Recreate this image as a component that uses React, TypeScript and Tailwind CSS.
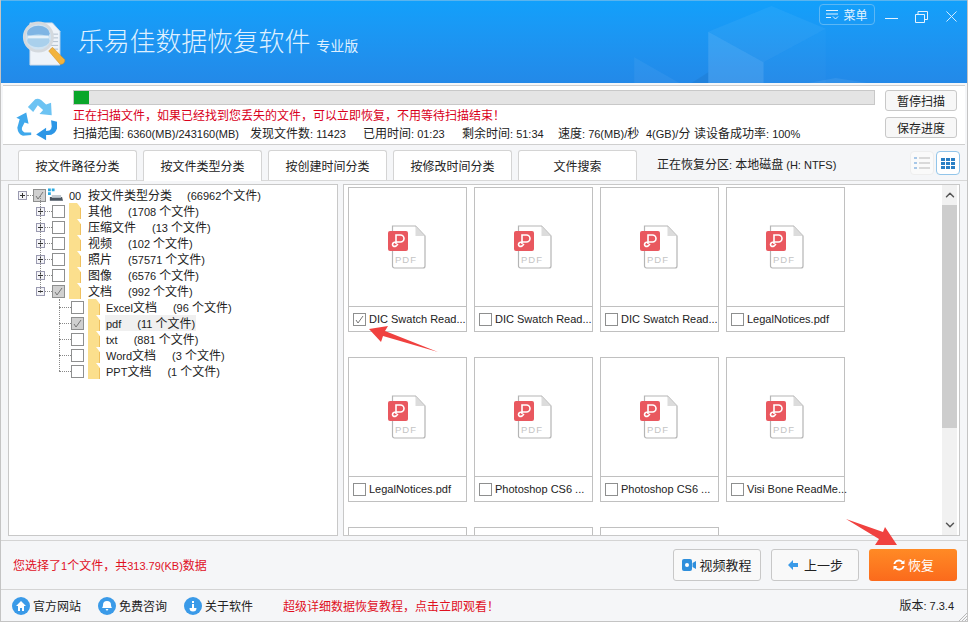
import { ChevronDown, ChevronUp } from 'lucide-react';

const font = 'font-["Noto_Sans_CJK_SC","Liberation_Sans",sans-serif]';

const tabs = ['按文件路径分类', '按文件类型分类', '按创建时间分类', '按修改时间分类', '文件搜索'];

const topFolders = [
  { name: '其他', count: '(1708 个文件)' },
  { name: '压缩文件', count: '(13 个文件)' },
  { name: '视频', count: '(102 个文件)' },
  { name: '照片', count: '(57571 个文件)' },
  { name: '图像', count: '(6576 个文件)' },
  { name: '文档', count: '(992 个文件)', open: true, checked: true },
];

const subFolders = [
  { name: 'Excel文档', count: '(96 个文件)' },
  { name: 'pdf', count: '(11 个文件)', checked: true },
  { name: 'txt', count: '(881 个文件)' },
  { name: 'Word文档', count: '(3 个文件)' },
  { name: 'PPT文档', count: '(1 个文件)' },
];

const files = [
  { name: 'DIC Swatch Read...', checked: true },
  { name: 'DIC Swatch Read...' },
  { name: 'DIC Swatch Read...' },
  { name: 'LegalNotices.pdf' },
  { name: 'LegalNotices.pdf' },
  { name: 'Photoshop CS6 ...' },
  { name: 'Photoshop CS6 ...' },
  { name: 'Visi Bone ReadMe...' },
];

const scanStats = [
  { text: '扫描范围: 6360(MB)/243160(MB)', width: 'w-[177px]' },
  { text: '发现文件数: 11423', width: 'w-[113px]' },
  { text: '已用时间: 01:23', width: 'w-[99px]' },
  { text: '剩余时间: 51:34', width: 'w-[96px]' },
  { text: '速度: 76(MB)/秒', width: 'w-[88px]' },
  { text: '4(GB)/分', width: 'w-[48px]' },
  { text: '读设备成功率: 100%', width: 'w-[110px]' },
];

// latin runs are narrower than the CJK around them in the original
function Mixed({ text }: { text: string }) {
  return (
    <>
      {text.split(/([\x20-\x7e]+)/).map((part, i) =>
        i % 2 === 1 ? (
          <span key={i} className='font-["Liberation_Sans",sans-serif] text-[11px]'>
            {part}
          </span>
        ) : (
          part
        ),
      )}
    </>
  );
}

function CheckBox({ checked, gray }: { checked?: boolean; gray?: boolean }) {
  return (
    <span
      className={`flex h-[13px] w-[13px] shrink-0 items-center justify-center border border-[#8e8f8f] ${
        gray ? 'bg-[#d0d0d0]' : 'bg-white'
      }`}
    >
      {checked && (
        <svg viewBox="0 0 11 11" className="h-[11px] w-[11px]">
          <path d="M2 6l2 3 5-7" fill="none" stroke="#777" strokeWidth="1" />
        </svg>
      )}
    </span>
  );
}

function Expander({ open }: { open?: boolean }) {
  return (
    <span className="flex h-[9px] w-[9px] shrink-0 items-center justify-center border border-[#9a9ab0] bg-[#f4f4f8]">
      <svg viewBox="0 0 7 7" className="h-[7px] w-[7px]">
        <path d={open ? 'M1 3.5h5' : 'M1 3.5h5M3.5 1v5'} stroke="#333" strokeWidth="1" />
      </svg>
    </span>
  );
}

function Folder() {
  return (
    <svg viewBox="0 0 13 16" className="h-4 w-[13px] shrink-0">
      <path d="M0 0h8l4 5v11H0z" fill="#fbdf8d" />
      <path d="M11 5h1v11h-1z" fill="#efc05e" />
    </svg>
  );
}

function DriveIcon() {
  return (
    <svg viewBox="0 0 16 14" className="h-[14px] w-[15px] shrink-0">
      <path d="M0 0h3v3H0zM4 0h3v3H4zM0 4h3v3H0z" fill="#29a9e0" />
      <path d="M2 9h13l1 4H2z" fill="#4a5560" />
      <path d="M4 7h10v3H4z" fill="#c3ccd3" />
    </svg>
  );
}

function TreeText({ name, count, highlight }: { name: string; count: string; highlight?: boolean }) {
  return (
    <span
      className={`flex h-4 items-center gap-4 whitespace-nowrap pr-px text-xs text-[#222] ${
        highlight ? '-ml-px bg-[#f0f0f0] pl-px' : ''
      }`}
    >
      <span>
        <Mixed text={name} />
      </span>
      <span>
        <Mixed text={count} />
      </span>
    </span>
  );
}

function Tree() {
  return (
    <div className="relative h-full w-[330px] shrink-0 border border-[#c8c8c8] bg-white pl-[9px] pt-[2px]">
      <span className="absolute left-[31px] top-[10px] h-[98px] border-l border-dotted border-[#888]" />
      <span className="absolute left-[50px] top-[114px] h-[72px] border-l border-dotted border-[#888]" />
      <div className="flex h-4 items-center">
        <Expander />
        <span className="w-[6px] border-b border-dotted border-[#888]" />
        <CheckBox checked gray />
        <span className="ml-[2px]">
          <DriveIcon />
        </span>
        <span className="ml-[6px] w-[19px] text-xs text-[#222]">
          <Mixed text="00" />
        </span>
        <span className="flex h-4 items-center gap-[15px] whitespace-nowrap text-xs text-[#222]">
          <span>按文件类型分类</span>
          <span>
            <Mixed text="(66962个文件)" />
          </span>
        </span>
      </div>
      {topFolders.map((f) => (
        <div key={f.name} className="flex h-4 items-center pl-[18px]">
          <Expander open={f.open} />
          <span className="w-[7px] border-b border-dotted border-[#888]" />
          <CheckBox checked={f.checked} gray={f.checked} />
          <span className="ml-1 mr-[6px]">
            <Folder />
          </span>
          <TreeText name={f.name} count={f.count} />
        </div>
      ))}
      {subFolders.map((f) => (
        <div key={f.name} className="flex h-4 items-center pl-[41px]">
          <span className="w-[12px] border-b border-dotted border-[#888]" />
          <CheckBox checked={f.checked} gray={f.checked} />
          <span className="ml-1 mr-[5px]">
            <Folder />
          </span>
          <TreeText name={f.name} count={f.count} highlight={f.name === 'pdf'} />
        </div>
      ))}
    </div>
  );
}

function PdfIcon() {
  return (
    <svg viewBox="0 0 38 44" className="h-11 w-[38px]">
      <path
        d="M4.5 1h23l9.5 10v30a2 2 0 0 1-2 2H6.500a2 2 0 0 1-2-2z"
        fill="#fff"
        stroke="#b5b5b5"
        strokeWidth="1.200"
      />
      <path d="M27.500 1l9.500 10h-9.500z" fill="#dcdcdc" />
      <rect x="0" y="6" width="20" height="20" rx="2" fill="#e9585f" />
      <path
        d="M8 19v-9h4.500a3 3 0 0 1 0 7H8c-2 0-3.500 1-3.500 2.500S6 22 8 21l2-2"
        fill="none"
        stroke="#fff"
        strokeWidth="1.600"
      />
      <text x="7" y="37.500" fontSize="9.500" letterSpacing="1" fill="#c4c4c4" fontFamily="Liberation Sans, sans-serif">
        PDF
      </text>
    </svg>
  );
}

function FileCard({ name, checked }: { name: string; checked?: boolean }) {
  return (
    <div className="h-[145px] w-[119px] border border-[#c0c0c0] bg-white">
      <div className="flex h-[119px] items-center justify-center border-b border-[#c0c0c0] pr-[2px]">
        <PdfIcon />
      </div>
      <div className="flex h-6 items-center gap-[3px] pl-[4px]">
        <CheckBox checked={checked} />
        <span className='whitespace-nowrap font-["Liberation_Sans",sans-serif] text-[11px] text-[#222]'>{name}</span>
      </div>
    </div>
  );
}

function RecycleIcon() {
  return (
    <svg viewBox="12 18 128 130" className="h-[43px] w-[43px]">
      <path d="M50 45L72 22Q80 18 90 24L105 38L120 32L122 70L85 66L96 54L80 40L66 60Z" fill="#6cc3f3" />
      <path d="M45 62L52 96L40 92L32 108Q30 118 40 122L60 122L60 130L35 132Q20 128 18 108L25 82L15 78Z" fill="#3fa8ec" />
      <path d="M120 85L138 90L138 110Q132 130 112 130L105 130L105 146L75 128L105 108L105 118L115 116Q122 112 122 104Z" fill="#2c96e6" />
    </svg>
  );
}

function LogoIcon() {
  return (
    <svg viewBox="0 0 46 48" className="h-[45px] w-[44px]">
      <path d="M8 2h24l8 9v36H8z" fill="#eef3f9" stroke="#c9d6e5" />
      <path d="M30 14h8M30 18h8M30 22h8M30 26h8M30 30h8" stroke="#aebccb" strokeWidth="1" />
      <path d="M28 32l4-4 13 13c1 3-2 6-5 5z" fill="#f2b33d" stroke="#c98a20" strokeWidth="0.500" />
      <circle cx="17" cy="17" r="15" fill="#cfe3f2" stroke="#d4d9de" strokeWidth="3" />
      <ellipse cx="17" cy="13" rx="12" ry="8" fill="#7fb5e4" />
      <ellipse cx="17" cy="21" rx="12" ry="7" fill="#a9d0ec" />
      <path d="M6 17h22" stroke="#e8f2f9" strokeWidth="3" />
    </svg>
  );
}

function HeaderArt() {
  return (
    <svg viewBox="0 0 968 83" className="absolute inset-0 h-full w-full">
      <path d="M711 31L767 62V83H711z" fill="#fff" fillOpacity="0.12" />
      <path d="M711 31L775 5L830 28L767 62z" fill="#fff" fillOpacity="0.05" />
      <path d="M767 62L830 28V83H767z" fill="#fff" fillOpacity="0.02" />
      <path d="M636 57L694 90H636z" fill="#fff" fillOpacity="0.05" />
      <path d="M694 83L711 72V83z" fill="#000" fillOpacity="0.05" />
      <path d="M812 83L840 78L872 83z" fill="#fff" fillOpacity="0.07" />
    </svg>
  );
}

function Header() {
  return (
    <div className="relative flex h-[83px] shrink-0 items-start border-t border-[#5ab4ee] bg-gradient-to-b from-[#12a0fb] to-[#2389e8] pl-[21px]">
      <HeaderArt />
      <span className="relative mt-[20px]">
        <LogoIcon />
      </span>
      <span className="relative ml-[12px] mt-[20px] whitespace-nowrap text-[26px] font-light leading-[38px] tracking-[-0.2px] text-[#dff0ff]">
        乐易佳数据恢复软件
      </span>
      <span className="relative ml-[6px] mt-[34px] whitespace-nowrap text-sm leading-5 text-[#dff0ff]">专业版</span>
      <div className="relative ml-auto mr-[10px] mt-[3px] flex items-start">
        <span className="flex h-[21px] w-[56px] items-center justify-center gap-1 rounded-sm border border-[#5cb7f5] text-xs text-[#e4f3ff]">
          <svg viewBox="0 0 13 11" className="h-[11px] w-[13px]">
            <path d="M0 1.500h12M0 5h12M0 8.500h5" stroke="#e4f3ff" strokeWidth="1" />
            <path d="M7 7.500l2.500 2.500L12 7.500" fill="none" stroke="#e4f3ff" strokeWidth="1" />
          </svg>
          菜单
        </span>
        <svg viewBox="0 0 13 3" className="ml-[10px] mt-[13px] h-[3px] w-[13px]">
          <path d="M0 1.500h13" stroke="#e4f3ff" strokeWidth="1" />
        </svg>
        <svg viewBox="0 0 13 12" className="ml-[17px] mt-[7px] h-3 w-[13px]">
          <path d="M.5 3.500h9v8h-9zM3 3.500v-3h9.500v8h-3" fill="none" stroke="#e4f3ff" strokeWidth="1" />
        </svg>
        <svg viewBox="0 0 12 12" className="ml-[18px] mt-[7px] h-[11px] w-[11px]">
          <path d="M.5.500l11 11M11.500.500l-11 11" stroke="#e4f3ff" strokeWidth="1" />
        </svg>
      </div>
    </div>
  );
}

function ScanPanel() {
  return (
    <div className="mx-[2px] mt-[2px] flex h-[60px] shrink-0 border-y border-[#cfcfcf] bg-white pl-[12px] pt-[4px]">
      <div className="mt-[8px]">
        <RecycleIcon />
      </div>
      <div className="ml-[15px] w-[802px] shrink-0">
        <div className="h-[15px] border border-[#c8c8c8] bg-[#e4e4e4]">
          <div className="h-full w-[15px] bg-[#0aa62a]" />
        </div>
        <p className="mt-[1px] whitespace-nowrap text-xs leading-[18px] text-[#d9001b]">
          正在扫描文件，如果已经找到您丢失的文件，可以立即恢复，不用等待扫描结束！
        </p>
        <div className="flex whitespace-nowrap text-xs leading-[17px] text-[#222]">
          {scanStats.map((s) => (
            <span key={s.text} className={`shrink-0 ${s.width}`}>
              <Mixed text={s.text} />
            </span>
          ))}
        </div>
      </div>
      <div className="ml-[10px] flex flex-col gap-[6px]">
        {['暂停扫描', '保存进度'].map((label) => (
          <button
            key={label}
            className="h-[21px] w-[72px] rounded-[3px] border border-[#c8c8c8] bg-[#f7f7f7] text-xs text-[#222]"
          >
            {label}
          </button>
        ))}
      </div>
    </div>
  );
}

function TabBar() {
  return (
    <div className="flex h-[36px] shrink-0 items-end border-b border-[#d8d8d8] pl-[17px]">
      <div className="flex gap-[6px]">
        {tabs.map((tab, i) => (
          <span
            key={tab}
            className={`flex h-[30px] w-[119px] items-center justify-center rounded-t-[3px] border border-b-0 border-[#d4d4d4] bg-white text-xs text-[#222] ${
              i === 1 ? 'relative -mb-px h-[31px]' : ''
            }`}
          >
            {tab}
          </span>
        ))}
      </div>
      <span className="mb-[7px] ml-[20px] whitespace-nowrap text-xs text-[#222]">
        <Mixed text="正在恢复分区: 本地磁盘 (H: NTFS)" />
      </span>
      <div className="mb-[5px] ml-auto mr-[7px] flex gap-[2px]">
        <span className="flex h-6 w-6 items-center justify-center rounded-sm border border-[#eeeeee] bg-[#fafafa]">
          <svg viewBox="0 0 16 12" className="h-3 w-4">
            <path d="M0 1h3M0 6h3M0 11h3" stroke="#a8c8e8" strokeWidth="2" />
            <path d="M5 1h11M5 6h11M5 11h11" stroke="#b8b8b8" strokeWidth="1" />
          </svg>
        </span>
        <span className="flex h-6 w-6 items-center justify-center rounded-sm border border-[#92c5ea] bg-white">
          <svg viewBox="0 0 14 11" className="h-[11px] w-[14px]">
            <path
              d="M0 0h4v3H0zM5 0h4v3H5zM10 0h4v3h-4zM0 4h4v3H0zM5 4h4v3H5zM10 4h4v3h-4zM0 8h4v3H0zM5 8h4v3H5zM10 8h4v3h-4z"
              fill="#2a7fc4"
            />
          </svg>
        </span>
      </div>
    </div>
  );
}

function FilePanel() {
  return (
    <div className="flex h-full w-[617px] shrink-0 overflow-hidden border border-[#c8c8c8] bg-white">
      <div className="grid flex-1 grid-cols-[repeat(4,119px)] content-start gap-x-[7px] gap-y-[25px] pl-[4px] pt-[2px]">
        {files.map((f, i) => (
          <FileCard key={i} name={f.name} checked={f.checked} />
        ))}
        {/* third row is scrolled off, only the top edge of the cards shows */}
        {[0, 1, 2].map((i) => (
          <div key={i} className="h-[145px] w-[119px] border border-[#c0c0c0] bg-white" />
        ))}
      </div>
      <div className="mr-[2px] flex w-[15px] shrink-0 flex-col items-center bg-[#f1f1f1]">
        <ChevronUp size={14} strokeWidth={2.500} className="mt-[3px] text-[#555]" />
        <div className="mt-[3px] h-[223px] w-full bg-[#cdcdcd]" />
        <ChevronDown size={14} strokeWidth={2.500} className="mb-[3px] mt-auto text-[#555]" />
      </div>
    </div>
  );
}

function ActionButton({ label, children }: { label: string; children: React.ReactNode }) {
  return (
    <button className="flex h-[32px] w-[88px] items-center justify-center gap-[3px] rounded-[3px] border border-[#c8c8c8] bg-[#f9f9f9] text-[13px] text-[#222]">
      {children}
      {label}
    </button>
  );
}

function StatusLink({ label, glyph }: { label: string; glyph: string }) {
  return (
    <span className="flex items-center gap-[3px] whitespace-nowrap text-xs text-[#222]">
      <span className="flex h-[18px] w-[18px] items-center justify-center rounded-full bg-[#3a9ae8]">
        <svg viewBox="0 0 12 12" className="h-3 w-3">
          <path d={glyph} fill="#fff" />
        </svg>
      </span>
      {label}
    </span>
  );
}

function Arrow({ className, box, d }: { className: string; box: string; d: string }) {
  return (
    <svg viewBox={box} className={`absolute ${className}`}>
      <path d={d} fill="#f0413f" />
    </svg>
  );
}

export default function App() {
  return (
    <div className={`relative flex h-[622px] w-[968px] flex-col overflow-hidden border-x border-b border-[#c4c4c4] bg-[#f5f6f8] ${font}`}>
      <Header />
      <ScanPanel />
      <TabBar />
      <div className="flex h-[360px] shrink-0 gap-[5px] border-b border-[#d4d4d4] pb-[4px] pl-[7px] pt-[3px]">
        <Tree />
        <FilePanel />
      </div>
      <div className="flex h-[49px] shrink-0 items-center border-b border-[#d4d4d4] pl-[12px] pr-[10px]">
        <span className="whitespace-nowrap text-xs text-[#e0101f]">
          <Mixed text="您选择了1个文件，共313.79(KB)数据" />
        </span>
        <div className="ml-auto flex gap-[10px]">
          <ActionButton label="视频教程">
            <svg viewBox="0 0 14 12" className="h-3 w-[14px]">
              <rect x="0" y="0" width="10" height="12" rx="2" fill="#2f8fdc" />
              <path d="M10.500 4l3.500-2v8l-3.500-2z" fill="#2f8fdc" />
              <circle cx="5" cy="6" r="2" fill="#fff" />
            </svg>
          </ActionButton>
          <ActionButton label="上一步">
            <svg viewBox="0 0 12 12" className="mr-[2px] h-3 w-3">
              <path d="M6 1L1 6l5 5V8h5V4H6z" fill="#3a9ae8" />
            </svg>
          </ActionButton>
          <button className="flex h-[32px] w-[88px] items-center justify-center gap-[2px] rounded-[3px] bg-gradient-to-b from-[#ff8a25] to-[#fb6a1c] text-[13px] text-white">
            <svg viewBox="0 0 14 14" className="h-[14px] w-[14px]">
              <path
                d="M1.500 6a5.500 5.500 0 0 1 9.500-2.500L12.500 2v4h-4l1.300-1.300A4 4 0 0 0 3.200 6zM12.500 8a5.500 5.500 0 0 1-9.500 2.500L1.500 12V8h4l-1.300 1.300A4 4 0 0 0 10.800 8z"
                fill="#fff"
              />
            </svg>
            恢复
          </button>
        </div>
      </div>
      <div className="flex h-[31px] shrink-0 items-center pl-[11px] pr-[13px]">
        <div className="flex gap-[17px]">
          <StatusLink label="官方网站" glyph="M6 1L1 6h2v5h2V8h2v3h2V6h2z" />
          <StatusLink label="免费咨询" glyph="M6 1a4 4 0 0 0-4 4c0 2-1 3-1 3h10s-1-1-1-3a4 4 0 0 0-4-4zM4.500 9h3L6 11z" />
          <StatusLink label="关于软件" glyph="M5 1h2v2H5zM5 4h2v4h2.500a3.500 3.500 0 0 1-7 0H5z" />
        </div>
        <span className="ml-[30px] whitespace-nowrap text-xs text-[#e0101f]">超级详细数据恢复教程，点击立即观看！</span>
        <span className="ml-auto whitespace-nowrap text-xs text-[#222]">
          <Mixed text="版本: 7.3.4" />
        </span>
      </div>
      <svg viewBox="0 0 8 8" className="absolute bottom-0 right-0 h-2 w-2">
        <path d="M8 0L0 8M8 3L3 8M8 6L6 8" stroke="#b8b8b8" strokeWidth="1" />
      </svg>
      <Arrow className="left-[368px] top-[325px] h-[28px] w-[70px]" box="0 0 70 28" d="M0 4L19 1L16 6L69 27L14 11L12 17Z" />
      <Arrow className="left-[844px] top-[518px] h-[28px] w-[54px]" box="0 0 54 28" d="M1 1L38 14L40 9L52 27L30 27L34 21Z" />
    </div>
  );
}
